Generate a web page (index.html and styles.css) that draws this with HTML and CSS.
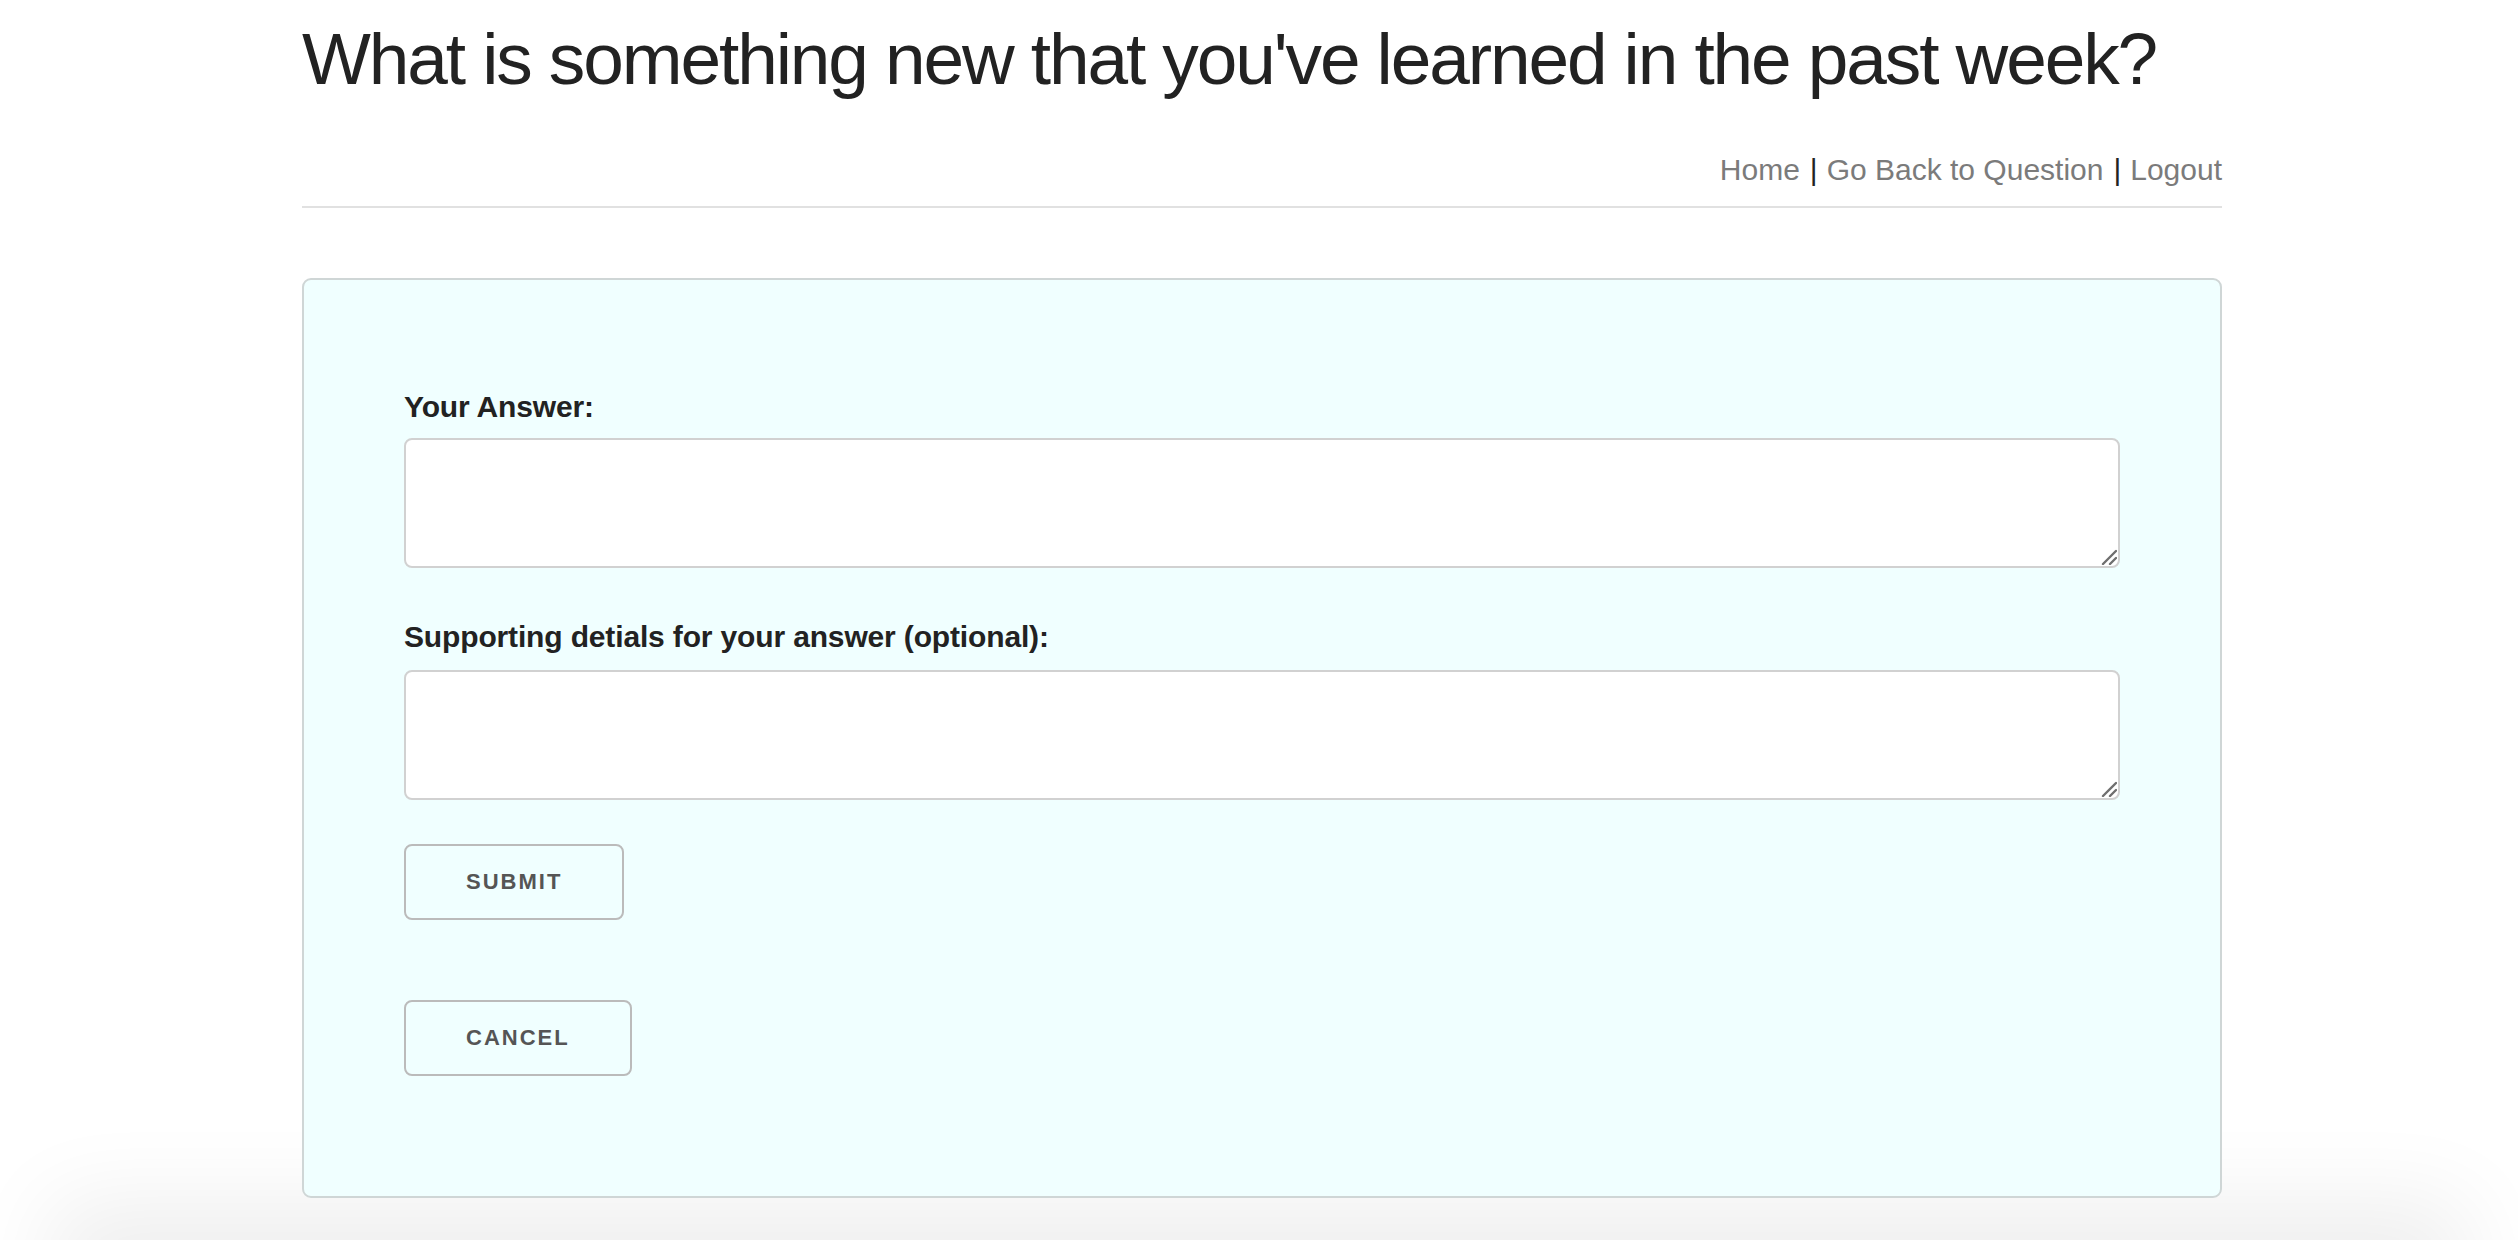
FILE: index.html
```html
<!DOCTYPE html>
<html lang="en">
<head>
<meta charset="utf-8">
<title>Answer</title>
<link rel="stylesheet" href="styles.css">
</head>
<body>
<div class="page">
  <h1 class="title">What is something new that you've learned in the past week?</h1>
  <nav class="nav"><a href="#" class="nav-link">Home</a><span class="sep">|</span><a href="#" class="nav-link">Go Back to Question</a><span class="sep">|</span><a href="#" class="nav-link">Logout</a></nav>
  <hr class="rule">
  <form class="card">
    <label class="label" for="answer">Your Answer:</label>
    <div class="field-wrap">
      <textarea class="field" id="answer"></textarea>
      <svg class="grip" width="16" height="16" viewBox="0 0 16 16"><path d="M2 15L15 2M9 15L15 9" stroke="#6f6f6f" stroke-width="2.4" stroke-linecap="round" fill="none"/></svg>
    </div>
    <label class="label label-second" for="details">Supporting detials for your answer (optional):</label>
    <div class="field-wrap">
      <textarea class="field" id="details"></textarea>
      <svg class="grip" width="16" height="16" viewBox="0 0 16 16"><path d="M2 15L15 2M9 15L15 9" stroke="#6f6f6f" stroke-width="2.4" stroke-linecap="round" fill="none"/></svg>
    </div>
    <button type="button" class="btn btn-submit">Submit</button>
    <button type="button" class="btn btn-cancel">Cancel</button>
  </form>
</div>
<div class="bottom-shade"></div>
</body>
</html>
```
FILE: styles.css
```css
html, body {
  margin: 0;
  padding: 0;
  background: #fff;
}
body {
  font-family: "Liberation Sans", Arial, Helvetica, sans-serif;
  color: #222;
  overflow: hidden;
  height: 1240px;
}
.page {
  width: 1920px;
  margin-left: 302px;
  padding-top: 11px;
}
.title {
  margin: 0;
  font-size: 73px;
  line-height: 96px;
  font-weight: 400;
  letter-spacing: -2.1px;
  color: #222;
}
.nav {
  margin-top: 39px;
  display: flex;
  justify-content: flex-end;
  font-size: 30px;
  line-height: 48px;
}
.nav-link {
  color: #7b7b7b;
  text-decoration: none;
  letter-spacing: 0;
}
.sep {
  color: #222;
  padding: 0 9px 0 10px;
}
.rule {
  margin: 12px 0 70px;
  border: 0;
  border-top: 2px solid #e1e1e1;
  height: 0;
}
.card {
  position: relative;
  z-index: 1;
  background: #f0ffff;
  border: 2px solid #cfd6d6;
  border-radius: 9px;
  padding: 103px 100px 120px;
  display: flex;
  flex-direction: column;
  align-items: flex-start;
}
.label {
  display: block;
  font-size: 30px;
  line-height: 48px;
  font-weight: 700;
  color: #222;
  margin-bottom: 7px;
  letter-spacing: -0.15px;
}
.label-second {
  margin-top: 45px;
  margin-bottom: 9px;
}
.field-wrap {
  position: relative;
  width: 100%;
}
.field {
  display: block;
  box-sizing: border-box;
  width: 100%;
  height: 130px;
  margin: 0;
  padding: 12px 20px;
  border: 2px solid #d1d1d1;
  border-radius: 8px;
  background: #fff;
  font: 30px "Liberation Sans", Arial, sans-serif;
  resize: none;
}
.grip {
  position: absolute;
  right: 3px;
  bottom: 3px;
  pointer-events: none;
}
.btn {
  box-sizing: border-box;
  height: 76px;
  padding: 0 60px;
  background: transparent;
  border: 2px solid #bbb;
  border-radius: 8px;
  color: #555;
  font-family: "Liberation Sans", Arial, sans-serif;
  font-size: 22px;
  font-weight: 700;
  letter-spacing: 2px;
  text-transform: uppercase;
  cursor: pointer;
}
.btn-submit {
  margin-top: 44px;
}
.btn-cancel {
  margin-top: 80px;
}
.bottom-shade {
  position: fixed;
  left: 90px;
  right: 90px;
  bottom: -60px;
  height: 60px;
  z-index: 0;
  box-shadow: 0 0 90px 40px rgba(0, 0, 0, 0.065);
  background: rgba(0,0,0,0.06);
}
```
